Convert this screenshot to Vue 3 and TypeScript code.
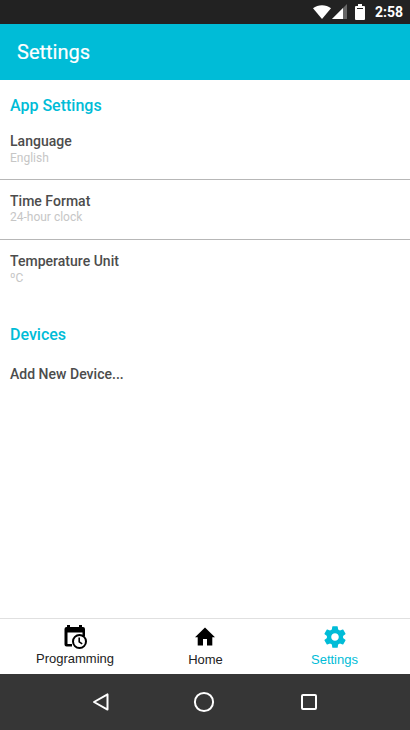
<script setup lang="ts">
interface Setting {
  title: string
  value: string
}

const settings: Setting[] = [
  { title: 'Language', value: 'English' },
  { title: 'Time Format', value: '24-hour clock' },
  { title: 'Temperature Unit', value: 'ºC' },
]
</script>

<template>
  <div class="screen">
    <div class="status">
      <svg class="wifi" width="18" height="14" viewBox="0 0 18 14"><path d="M0 3.2C5 -0.9 13 -0.9 18 3.2L9 14z" fill="#fff" /></svg>
      <svg class="signal" width="15" height="15" viewBox="0 0 15 15">
        <path d="M15 0v15H0z" fill="#666" />
        <path d="M11 4v11H0z" fill="#fff" />
      </svg>
      <svg class="battery" width="10" height="16" viewBox="0 0 10 16">
        <path d="M3 0h4v2h2q1 0 1 1v12q0 1-1 1H1q-1 0-1-1V3q0-1 1-1h2z" fill="#fff" />
        <path d="M2 4h6v1H2z" fill="#222" />
      </svg>
      <span class="time">2:58</span>
    </div>
    <header class="appbar">Settings</header>
    <main class="content">
      <h2 class="section">App Settings</h2>
      <div v-for="s in settings" :key="s.title" class="item">
        <div class="title">{{ s.title }}</div>
        <div class="value">{{ s.value }}</div>
      </div>
      <h2 class="section devices">Devices</h2>
      <div class="title add">Add New Device...</div>
    </main>
    <nav class="tabs">
      <div class="tab programming">
        <svg width="24" height="25" viewBox="0 0 24 25">
          <path d="M4 0h3v2h9V0h3v2h1q2 0 2 2v7h-2.5V7.5h-15V19H9v2.5H3.500q-2 0-2-2V4q0-2 2-2H4z" fill="#000" />
          <circle cx="16.500" cy="16.500" r="6.500" fill="#fff" stroke="#000" stroke-width="2" />
          <path d="M16.200 12.500v4.300l3 2" fill="none" stroke="#000" stroke-width="1.600" />
        </svg>
        <span class="label">Programming</span>
      </div>
      <div class="tab home">
        <svg width="24" height="24" viewBox="0 0 24 24"><path d="M10 20.500v-6.500h4v6.500h5.300V12.300H22L12 2.500 2 12.300h2.700v8.200z" fill="#000" /></svg>
        <span class="label">Home</span>
      </div>
      <div class="tab active">
        <svg width="26" height="26" viewBox="0 0 24 24"><path d="M19.43 12.98c.04-.32.07-.64.07-.98s-.03-.66-.07-.98l2.11-1.65c.19-.15.24-.42.12-.64l-2-3.46c-.12-.22-.39-.3-.61-.22l-2.49 1c-.52-.4-1.08-.73-1.69-.98l-.38-2.65C14.46 2.18 14.25 2 14 2h-4c-.25 0-.46.18-.49.42l-.38 2.65c-.61.25-1.17.59-1.69.98l-2.49-1c-.23-.09-.49 0-.61.22l-2 3.46c-.13.22-.07.49.12.64l2.11 1.65c-.04.32-.07.65-.07.98s.03.66.07.98l-2.11 1.65c-.19.15-.24.42-.12.64l2 3.46c.12.22.39.3.61.22l2.49-1c.52.4 1.08.73 1.69.98l.38 2.65c.03.24.24.42.49.42h4c.25 0 .46-.18.49-.42l.38-2.65c.61-.25 1.17-.59 1.69-.98l2.49 1c.23.09.49 0 .61-.22l2-3.46c.12-.22.07-.49-.12-.64zM12 15.5c-1.93 0-3.5-1.57-3.5-3.5s1.57-3.5 3.5-3.5 3.5 1.57 3.5 3.5-1.57 3.5-3.5 3.5z" fill="#00bcd7" /></svg>
        <span class="label">Settings</span>
      </div>
    </nav>
    <div class="system">
      <svg width="18" height="20" viewBox="0 0 18 20"><path d="M15.5 2.4v15.2L2 10z" fill="none" stroke="#fff" stroke-width="2" stroke-linejoin="round" /></svg>
      <svg class="circle" width="22" height="22" viewBox="0 0 22 22"><circle cx="11" cy="11" r="9.1" fill="none" stroke="#fff" stroke-width="2" /></svg>
      <svg width="16" height="16" viewBox="0 0 16 16"><rect x="1" y="1" width="14" height="14" rx="1" fill="none" stroke="#fff" stroke-width="2" /></svg>
    </div>
  </div>
</template>

<style>
body {
  margin: 0;
}
</style>

<style scoped>
.screen {
  width: 410px;
  height: 730px;
  display: flex;
  flex-direction: column;
  background: #fff;
  font-family: Roboto, sans-serif;
  overflow: hidden;
}
svg {
  display: block;
  flex: none;
}
.status {
  height: 24px;
  box-sizing: border-box;
  padding-right: 7px;
  background: #222;
  display: flex;
  justify-content: flex-end;
  align-items: flex-start;
}
.wifi {
  margin-top: 5px;
}
.signal {
  margin: 4px 0 0 1px;
}
.battery {
  margin: 4px 10px 0 8px;
}
.time {
  color: #fff;
  font-size: 14px;
  font-weight: 700;
  line-height: 24px;
}
.appbar {
  height: 56px;
  box-sizing: border-box;
  padding-left: 17px;
  background: #00bcd7;
  color: #fff;
  font-size: 20px;
  line-height: 56px;
  -webkit-text-stroke: 0.2px #fff;
}
.content {
  flex: 1;
}
.section {
  margin: 16px 0 0 10px;
  color: #00bcd7;
  font-size: 16px;
  font-weight: 500;
  line-height: 20px;
}
.item {
  height: 60px;
  box-sizing: border-box;
  padding: 13px 10px 0;
  border-bottom: 1px solid #b7b7b7;
}
.section + .item {
  height: 64px;
  padding-top: 17px;
}
.item:nth-of-type(3) {
  border-bottom: 0;
}
.title {
  color: #4c4c4c;
  font-size: 14px;
  font-weight: 500;
  line-height: 17px;
  letter-spacing: 0.02px;
}
.value {
  color: #c6c6c6;
  font-size: 12px;
  line-height: 16px;
}
.item:nth-of-type(2) .value {
  line-height: 14px;
}
.devices {
  margin-top: 25px;
}
.add {
  margin: 21px 0 0 10px;
}
.tabs {
  height: 56px;
  box-sizing: border-box;
  padding: 0 10px;
  border-top: 1px solid #e0e0e0;
  display: flex;
}
.tab {
  flex: 1;
  display: flex;
  flex-direction: column;
  align-items: center;
  justify-content: space-between;
  padding: 6px 0 7px;
  color: #222;
}
.label {
  font: 13px/15px "Liberation Sans", sans-serif;
}
.programming {
  padding-bottom: 8px;
}
.home .label {
  padding-left: 1px;
}
.active {
  color: #00bcd7;
  padding-top: 5px;
}
.active .label {
  padding-right: 1px;
}
.system {
  height: 56px;
  box-sizing: border-box;
  padding: 0 93px 0 92px;
  background: #363636;
  display: flex;
  justify-content: space-between;
  align-items: center;
}
.circle {
  margin: 0 2px 0 -2px;
}
</style>
